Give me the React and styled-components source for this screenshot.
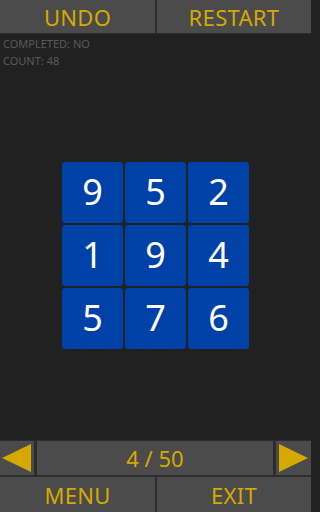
import React from "react";
import styled, { createGlobalStyle } from "styled-components";

const GlobalStyle = createGlobalStyle`
  html, body {
    margin: 0;
    padding: 0;
    background: #212121;
  }
  * {
    box-sizing: border-box;
  }
`;

const Screen = styled.div`
  width: 311px;
  height: 512px;
  display: flex;
  flex-direction: column;
  background: #212121;
  font-family: "Noto Sans", "Open Sans", sans-serif;
  overflow: hidden;
`;

const TopRow = styled.div`
  display: grid;
  grid-template-columns: 155px 1fr;
  column-gap: 2px;
  background: #2c2c2c;
  padding-bottom: 1px;
`;

const BarButton = styled.button`
  height: ${(p) => p.$h || 33}px;
  border: none;
  margin: 0;
  padding: 0;
  background: #4b4b4b;
  color: #d6a900;
  font-family: inherit;
  font-size: 22px;
  letter-spacing: 0.3px;
  line-height: 1;
  display: flex;
  align-items: center;
  justify-content: center;
  cursor: pointer;
`;

const Main = styled.div`
  flex: 1;
  display: flex;
  flex-direction: column;
`;

const Status = styled.div`
  height: 36px;
  padding: 1px 3px;
  color: #5a5a5a;
  font-size: 11px;
  line-height: 17px;
`;

const BoardArea = styled.div`
  flex: 1;
  display: flex;
  align-items: center;
  justify-content: center;
`;

const Board = styled.div`
  display: grid;
  grid-template-columns: repeat(3, 61px);
  grid-auto-rows: 61px;
  gap: 2px;
`;

const Tile = styled.div`
  background: #0041a8;
  border-radius: 3px;
  color: #ffffff;
  font-size: 36px;
  display: flex;
  align-items: center;
  justify-content: center;
  line-height: 1;
`;

const Footer = styled.div`
  background: #2c2c2c;
  padding-top: 1px;
  display: flex;
  flex-direction: column;
  gap: 2px;
`;

const NavRow = styled.div`
  display: grid;
  grid-template-columns: 34px 1fr 35px;
  column-gap: 3px;
`;

const BottomRow = styled.div`
  display: grid;
  grid-template-columns: 155px 1fr;
  column-gap: 2px;
`;

const Level = styled.div`
  height: 34px;
  background: #4b4b4b;
  color: #d6a900;
  font-size: 22px;
  display: flex;
  align-items: center;
  justify-content: center;
`;

const ArrowButton = styled.button`
  height: 34px;
  border: none;
  margin: 0;
  padding: 0;
  background: #4b4b4b;
  display: flex;
  align-items: center;
  justify-content: ${(p) => (p.$dir === "left" ? "flex-end" : "flex-start")};
  padding-${(p) => (p.$dir === "left" ? "right" : "left")}: 2px;
  cursor: pointer;
`;

const Arrow = ({ dir }) => (
  <svg width="30" height="28" viewBox="0 0 30 28">
    {dir === "left" ? (
      <polygon points="0,14 29,0 29,28" fill="#d6a900" />
    ) : (
      <polygon points="30,14 1,0 1,28" fill="#d6a900" />
    )}
  </svg>
);

const tiles = [9, 5, 2, 1, 9, 4, 5, 7, 6];

export default function App() {
  return (
    <>
      <GlobalStyle />
      <Screen>
        <TopRow>
          <BarButton>UNDO</BarButton>
          <BarButton>RESTART</BarButton>
        </TopRow>
        <Main>
          <Status>
            <div>COMPLETED: NO</div>
            <div>COUNT: 48</div>
          </Status>
          <BoardArea>
            <Board>
              {tiles.map((n, i) => (
                <Tile key={i}>{n}</Tile>
              ))}
            </Board>
          </BoardArea>
        </Main>
        <Footer>
          <NavRow>
            <ArrowButton $dir="left">
              <Arrow dir="left" />
            </ArrowButton>
            <Level>4 / 50</Level>
            <ArrowButton $dir="right">
              <Arrow dir="right" />
            </ArrowButton>
          </NavRow>
          <BottomRow>
            <BarButton $h={35}>MENU</BarButton>
            <BarButton $h={35}>EXIT</BarButton>
          </BottomRow>
        </Footer>
      </Screen>
    </>
  );
}
